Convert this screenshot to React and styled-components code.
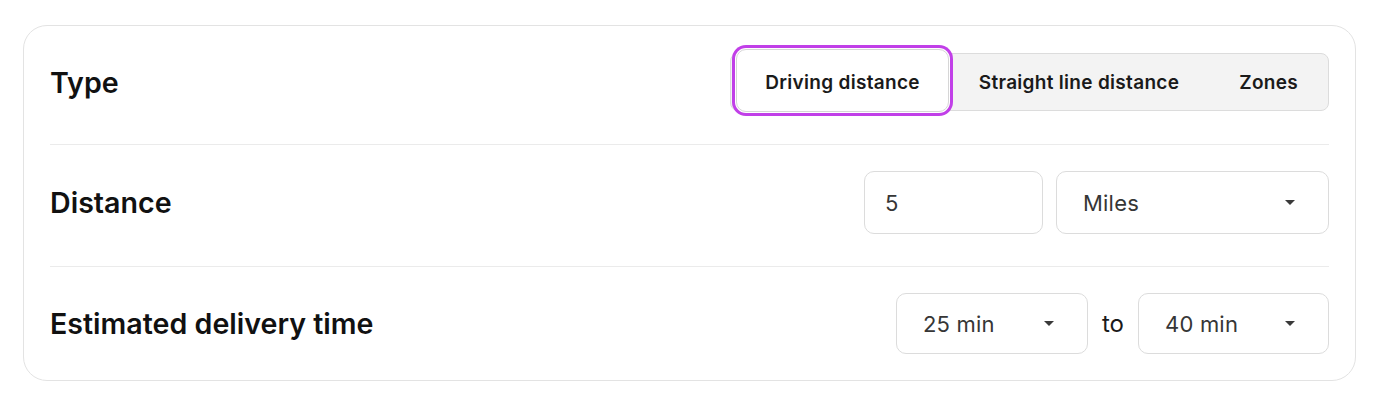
import React, { useState } from "react";
import styled, { createGlobalStyle } from "styled-components";

const GlobalStyle = createGlobalStyle`
  body {
    margin: 0;
    background: #ffffff;
    font-family: Inter, "Noto Sans", sans-serif;
    color: #1a1a1a;
  }
`;

const Card = styled.section`
  margin: 25px 26px 0 23px;
  border: 1px solid #e3e3e3;
  border-radius: 24px;
  padding: 0 26px;
  background: #fff;
`;

const Row = styled.div`
  display: flex;
  align-items: center;
  justify-content: space-between;
  padding: ${(p) => p.pad || "26px 0 32px"};
  border-bottom: 1px solid #ebebeb;
  &:last-child {
    border-bottom: none;
  }
`;

const Label = styled.h2`
  margin: 0;
  font-size: 28.6px;
  font-weight: 600;
  color: #111;
`;

const Controls = styled.div`
  display: flex;
  align-items: center;
  gap: 13px;
`;

const Segmented = styled.div`
  display: flex;
  align-items: center;
  height: 56px;
  background: #f3f3f3;
  border: 1px solid #dcdcdc;
  border-radius: 8px;
`;

const Segment = styled.button`
  height: ${(p) => (p.active ? "63px" : "56px")};
  align-self: ${(p) => (p.active ? "flex-end" : "center")};
  padding: ${(p) => (p.active ? "4px 28px 0" : "0 30px")};
  border: ${(p) => (p.active ? "1px solid #d6d6d6" : "none")};
  border-radius: ${(p) => (p.active ? "10px" : "0")};
  background: ${(p) => (p.active ? "#fff" : "transparent")};
  box-shadow: ${(p) =>
    p.active ? "0 0 0 1px #fff, 0 0 0 4px #c13fe8" : "none"};
  margin: ${(p) => (p.active ? "0 0 -2px 5px" : "0")};
  font-family: inherit;
  font-size: 19px;
  font-weight: 600;
  letter-spacing: 0.3px;
  color: #1a1a1a;
  white-space: nowrap;
  cursor: pointer;
`;

const Box = styled.div`
  display: flex;
  align-items: center;
  justify-content: space-between;
  box-sizing: border-box;
  width: ${(p) => p.w}px;
  height: ${(p) => p.h || 61}px;
  padding: 0 33px 0 ${(p) => p.pl || 26}px;
  border: 1px solid #dcdcdc;
  border-radius: 10px;
  font-size: 22px;
  letter-spacing: 0.2px;
  color: #363636;
  background: #fff;
`;

const Caret = styled.span`
  width: 0;
  height: 0;
  border-left: 5px solid transparent;
  border-right: 5px solid transparent;
  border-top: 5px solid #3a3a3a;
`;

const To = styled.span`
  font-size: 24px;
  padding: 0 1px;
  color: #1a1a1a;
`;

export default function App() {
  const [type, setType] = useState("driving");
  const types = [
    { id: "driving", label: "Driving distance" },
    { id: "straight", label: "Straight line distance" },
    { id: "zones", label: "Zones" },
  ];
  return (
    <>
      <GlobalStyle />
      <Card>
        <Row pad="27px 0 33px">
          <Label>Type</Label>
          <Segmented>
            {types.map((t) => (
              <Segment
                key={t.id}
                active={type === t.id}
                onClick={() => setType(t.id)}
              >
                {t.label}
              </Segment>
            ))}
          </Segmented>
        </Row>
        <Row pad="26px 0 32px">
          <Label>Distance</Label>
          <Controls>
            <Box w={179} h={63} pl={20}>5</Box>
            <Box w={273} h={63}>
              Miles
              <Caret />
            </Box>
          </Controls>
        </Row>
        <Row pad="26px 0 26px">
          <Label>Estimated delivery time</Label>
          <Controls>
            <Box w={192}>
              25 min
              <Caret />
            </Box>
            <To>to</To>
            <Box w={191}>
              40 min
              <Caret />
            </Box>
          </Controls>
        </Row>
      </Card>
    </>
  );
}
